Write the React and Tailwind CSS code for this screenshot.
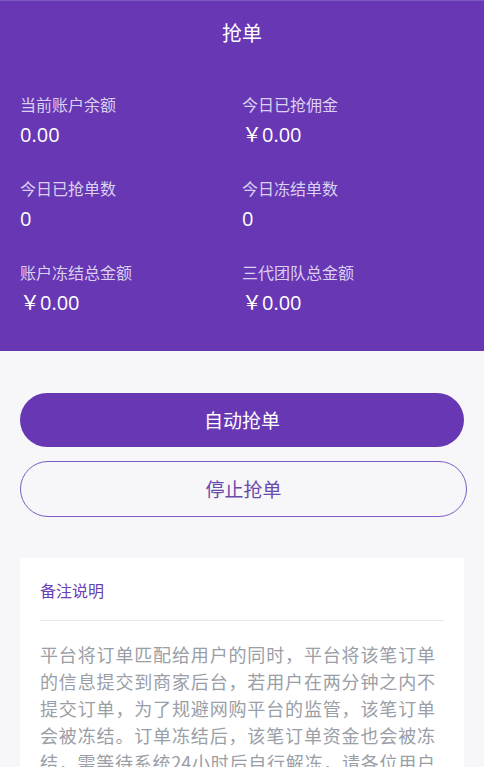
import React from 'react';

const stats = [
  { label: '当前账户余额', value: '0.00' },
  { label: '今日已抢佣金', value: '￥0.00' },
  { label: '今日已抢单数', value: '0' },
  { label: '今日冻结单数', value: '0' },
  { label: '账户冻结总金额', value: '￥0.00' },
  { label: '三代团队总金额', value: '￥0.00' },
];

const cjk = "font-['Microsoft_YaHei','Noto_Sans_CJK_SC',sans-serif]";

const App = () => {
  return (
    <div className={`min-h-[767px] bg-[#f7f6f8] ${cjk}`}>
      <div className="bg-[#6737b4] border-t border-[#7c58c2] pb-[36px]">
        <div className="h-[64px] flex items-center justify-center text-white text-[20px]">抢单</div>
        <div className="mt-[28px] grid grid-cols-[222px_1fr] gap-y-[30px] pl-[20px]">
          {stats.map((s) => (
            <div key={s.label}>
              <div className="text-[16px] leading-[22px] text-[#dcd0f0]">{s.label}</div>
              <div className="mt-[8px] text-[20px] leading-[24px] text-white font-['Open_Sans','Noto_Sans_CJK_SC',sans-serif]">
                {s.value}
              </div>
            </div>
          ))}
        </div>
      </div>

      <div className="px-[20px] pt-[42px]">
        <button className="w-[444px] h-[54px] rounded-full bg-[#6737b4] text-white text-[19px] flex items-center justify-center">
          自动抢单
        </button>
        <button className="mt-[14px] w-[447px] h-[56px] rounded-full border border-[#7b5cc2] text-[#6a48ad] text-[19px] flex items-center justify-center">
          停止抢单
        </button>

        <div className="mt-[41px] w-[444px] bg-white px-[20px] pt-[21px] pb-[24px]">
          <div className="text-[16px] leading-[22px] text-[#6b3fb5]">备注说明</div>
          <div className="mt-[19px] h-px bg-[#e9e8ec]" />
          <p className="mt-[20px] w-[395px] text-[18px] leading-[27px] text-[#9a9ea6] text-justify [text-spacing-trim:space-all]">
            平台将订单匹配给用户的同时，平台将该笔订单的信息提交到商家后台，若用户在两分钟之内不提交订单，为了规避网购平台的监管，该笔订单会被冻结。订单冻结后，该笔订单资金也会被冻结，需等待系统24小时后自行解冻，请各位用户务必在两分钟之内提交订单，以免造成不必要的损失。
          </p>
        </div>
      </div>
    </div>
  );
};

export default App;
